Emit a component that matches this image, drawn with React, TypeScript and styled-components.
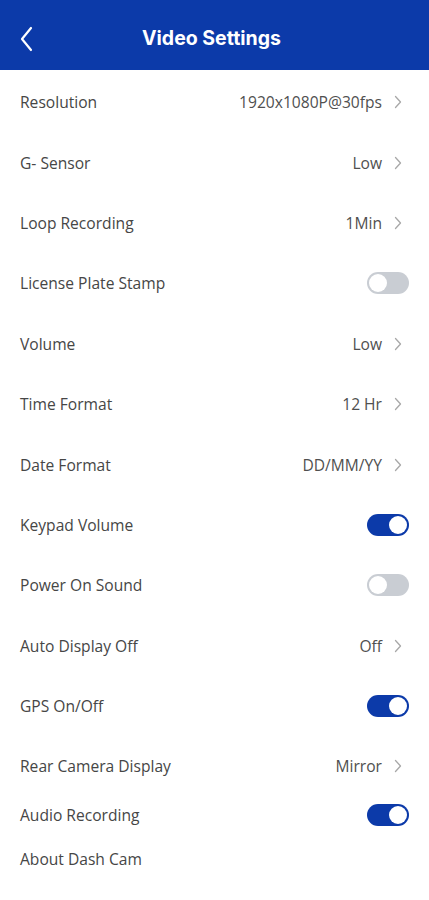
import styled, { createGlobalStyle } from 'styled-components';

const GlobalStyle = createGlobalStyle`
  body {
    margin: 0;
    background: #ffffff;
    font-family: "Open Sans", "Noto Sans", sans-serif;
  }
`;

const Page = styled.div`
  width: 429px;
  min-height: 900px;
  background: #ffffff;
`;

const Header = styled.header`
  height: 70px;
  background: #0c3aa9;
  display: flex;
  align-items: center;
  justify-content: center;
  position: relative;
  margin-bottom: 2px;
`;

const BackButton = styled.button`
  position: absolute;
  left: 14px;
  top: 25px;
  width: 24px;
  height: 28px;
  padding: 0;
  border: none;
  background: transparent;
  display: flex;
  align-items: center;
  justify-content: center;
`;

const Title = styled.h1`
  margin: 6px 6px 0 0;
  color: #ffffff;
  font-family: Inter, "Open Sans", sans-serif;
  font-size: 19.5px;
  font-weight: 700;
`;

const List = styled.div`
  display: flex;
  flex-direction: column;
`;

const Row = styled.div<{ $h: number }>`
  height: ${(p) => p.$h}px;
  display: flex;
  align-items: center;
  justify-content: space-between;
  padding: 0 20px;
`;

const Label = styled.span`
  font-size: 15.6px;
  color: #464646;
`;

const ValueGroup = styled.div`
  display: flex;
  align-items: center;
  gap: 12px;
  margin-right: 7px;
`;

const Value = styled.span`
  font-size: 15.6px;
  color: #505050;
`;

const Switch = styled.div<{ $on: boolean }>`
  width: 42px;
  height: 22px;
  border-radius: 11px;
  box-sizing: border-box;
  background: ${(p) => (p.$on ? '#0c3aa9' : '#c9cdd3')};
  position: relative;
  &::after {
    content: '';
    position: absolute;
    top: 2px;
    left: ${(p) => (p.$on ? '22px' : '2px')};
    width: 18px;
    height: 18px;
    border-radius: 50%;
    background: #ffffff;
  }
`;

const Chevron = () => (
  <svg width="8" height="14" viewBox="0 0 8 14">
    <path d="M1.5 1.5L6.5 7l-5 5.5" fill="none" stroke="#a8a8a8" strokeWidth="1.3" strokeLinecap="round" strokeLinejoin="round" />
  </svg>
);

type Item = { label: string; value?: string; toggle?: boolean; on?: boolean; h?: number };

const items: Item[] = [
  { label: 'Resolution', value: '1920x1080P@30fps' },
  { label: 'G- Sensor', value: 'Low' },
  { label: 'Loop Recording', value: '1Min' },
  { label: 'License Plate Stamp', toggle: true, on: false },
  { label: 'Volume', value: 'Low' },
  { label: 'Time Format', value: '12 Hr' },
  { label: 'Date Format', value: 'DD/MM/YY' },
  { label: 'Keypad Volume', toggle: true, on: true },
  { label: 'Power On Sound', toggle: true, on: false },
  { label: 'Auto Display Off', value: 'Off' },
  { label: 'GPS On/Off', toggle: true, on: true },
  { label: 'Rear Camera Display', value: 'Mirror' },
  { label: 'Audio Recording', toggle: true, on: true, h: 36 },
  { label: 'About Dash Cam', h: 52 },
];

export default function App() {
  return (
    <Page>
      <GlobalStyle />
      <Header>
        <BackButton aria-label="Back">
          <svg width="14" height="26" viewBox="0 0 14 26">
            <path d="M12 2L3 13l9 11" fill="none" stroke="#ffffff" strokeWidth="2.2" strokeLinecap="round" strokeLinejoin="round" />
          </svg>
        </BackButton>
        <Title>Video Settings</Title>
      </Header>
      <List>
        {items.map((it) => (
          <Row key={it.label} $h={it.h ?? 60.4}>
            <Label>{it.label}</Label>
            {it.toggle ? (
              <Switch $on={!!it.on} />
            ) : it.value ? (
              <ValueGroup>
                <Value>{it.value}</Value>
                <Chevron />
              </ValueGroup>
            ) : null}
          </Row>
        ))}
      </List>
    </Page>
  );
}
